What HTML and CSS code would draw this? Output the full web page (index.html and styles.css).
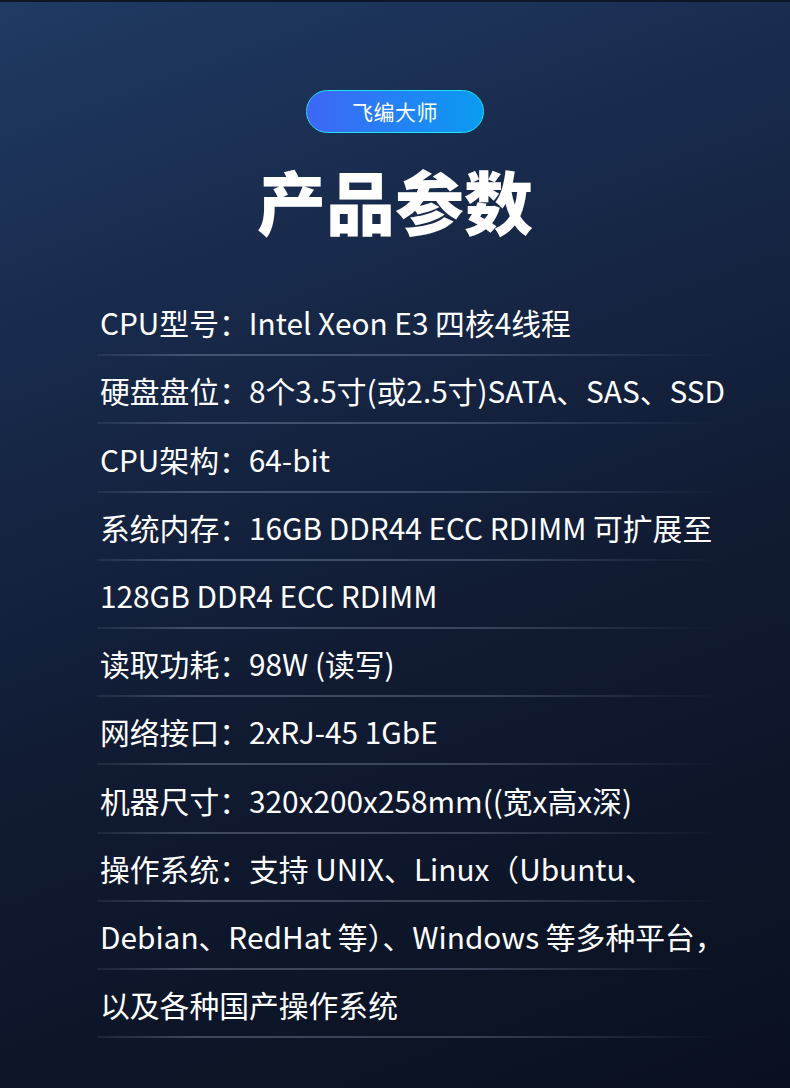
FILE: index.html
```html
<!DOCTYPE html>
<html lang="zh-CN">
<head>
<meta charset="utf-8">
<title>产品参数</title>
<link rel="stylesheet" href="styles.css">
</head>
<body>
<main class="page">
  <header class="head">
    <div class="badge">飞编大师</div>
    <h1 class="title">产品参数</h1>
  </header>
  <ul class="specs">
    <li class="row">CPU型号：Intel Xeon E3 四核4线程</li>
    <li class="row">硬盘盘位：8个3.5寸(或2.5寸)SATA、SAS、SSD</li>
    <li class="row">CPU架构：64-bit</li>
    <li class="row">系统内存：16GB DDR44 ECC RDIMM 可扩展至</li>
    <li class="row">128GB DDR4 ECC RDIMM</li>
    <li class="row">读取功耗：98W (读写)</li>
    <li class="row">网络接口：2xRJ-45 1GbE</li>
    <li class="row">机器尺寸：320x200x258mm((宽x高x深)</li>
    <li class="row">操作系统：支持 UNIX、Linux（Ubuntu、</li>
    <li class="row">Debian、RedHat 等）、Windows 等多种平台，</li>
    <li class="row">以及各种国产操作系统</li>
  </ul>
</main>
</body>
</html>
```

FILE: styles.css
```css
html, body {
  margin: 0;
  padding: 0;
}
body {
  width: 790px;
  height: 1088px;
  overflow: hidden;
  font-family: "Noto Sans CJK SC", "Noto Sans", sans-serif;
  color: #ffffff;
  background: linear-gradient(160deg, #203a64 0%, #172848 30%, #101a31 60%, #0a101f 100%);
}
.page {
  height: 1088px;
  box-sizing: border-box;
  border-top: 2px solid #0e1628;
}
.head {
  display: flex;
  flex-direction: column;
  align-items: center;
  padding-top: 88px;
}
.badge {
  width: 178px;
  height: 43px;
  box-sizing: border-box;
  border-radius: 22px;
  border: 1.5px solid #1fe3f2;
  background: linear-gradient(90deg, #3e66f6 0%, #0a9cf2 100%);
  display: flex;
  align-items: center;
  justify-content: center;
  font-size: 21px;
  letter-spacing: 0.5px;
  line-height: 1;
}
.title {
  margin: 22px 0 0;
  font-size: 69px;
  font-weight: 900;
  line-height: 90px;
  letter-spacing: 0;
}
.specs {
  list-style: none;
  margin: 0;
  padding: 0 0 0 97px;
  margin-top: 44px;
}
.row {
  position: relative;
  height: 68.2px;
  display: flex;
  align-items: center;
  padding-left: 3px;
  font-size: 29.8px;
  font-weight: 400;
  line-height: 1;
  white-space: nowrap;
}
.row::after {
  content: "";
  position: absolute;
  left: 0;
  bottom: 1px;
  width: 625px;
  height: 2px;
  background: linear-gradient(90deg, rgba(255,255,255,0.06) 0%, rgba(190,205,230,0.28) 15%, rgba(190,205,230,0.24) 60%, rgba(190,205,230,0) 100%);
}
```
